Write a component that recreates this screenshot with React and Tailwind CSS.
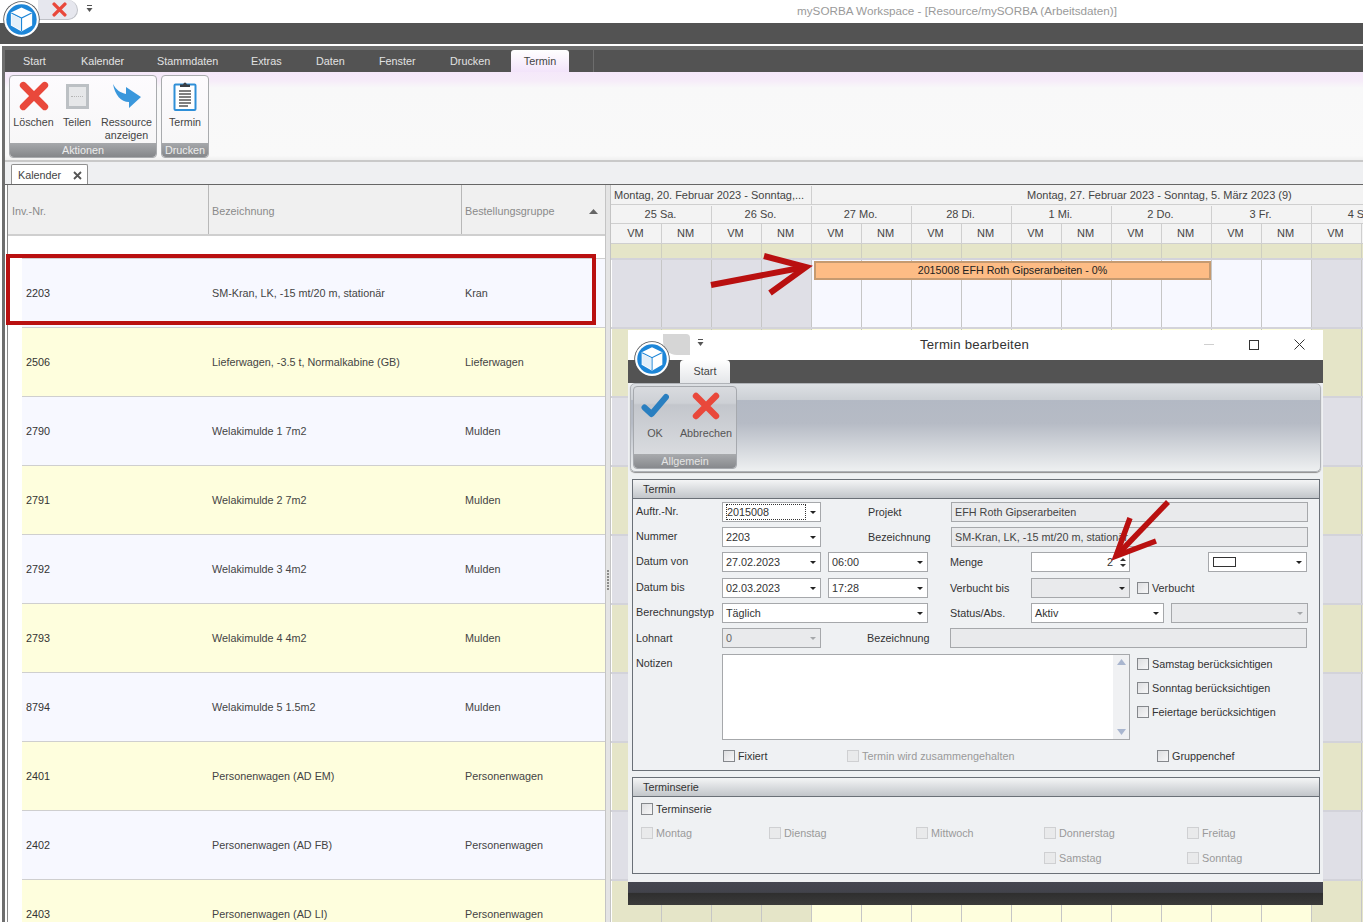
import React from "react";

const rows = [
  ["2203", "SM-Kran, LK, -15 mt/20 m, stationär", "Kran"],
  ["2506", "Lieferwagen, -3.5 t, Normalkabine (GB)", "Lieferwagen"],
  ["2790", "Welakimulde 1 7m2", "Mulden"],
  ["2791", "Welakimulde 2 7m2", "Mulden"],
  ["2792", "Welakimulde 3 4m2", "Mulden"],
  ["2793", "Welakimulde 4 4m2", "Mulden"],
  ["8794", "Welakimulde 5 1.5m2", "Mulden"],
  ["2401", "Personenwagen (AD EM)", "Personenwagen"],
  ["2402", "Personenwagen (AD FB)", "Personenwagen"],
  ["2403", "Personenwagen (AD LI)", "Personenwagen"],
];
const days = ["25 Sa.", "26 So.", "27 Mo.", "28 Di.", "1 Mi.", "2 Do.", "3 Fr.", "4 Sa."];
const halves = Array.from({ length: 16 }, (_, i) => i);
const isWeekend = (i) => i < 4 || i >= 14;

function Logo({ size }) {
  return (
    <svg width={size} height={size} viewBox="0 0 40 40">
      <circle cx="20" cy="20" r="19.7" fill="#4f5154" />
      <circle cx="20" cy="20" r="18.8" fill="#ffffff" />
      <circle cx="20" cy="20" r="16.4" fill="#1d86d8" />
      <path d="M20 7 L31.5 12.5 L31.5 26.5 L20 33 L8.5 26.5 L8.5 12.5 Z" fill="#ffffff" />
      <path d="M9 13 L20 18.5 L31 13 M20 18.5 V32.5" stroke="#1d86d8" strokeWidth="1.3" fill="none" />
      <path d="M9.2 14.2 L19.3 19.2 L19.3 31.6 L9.2 25.9 Z" fill="#e3eff9" />
    </svg>
  );
}

function QuickArrow({ color = "#555" }) {
  return (
    <svg width="7" height="8" viewBox="0 0 7 8">
      <rect x="1" y="0" width="5" height="1" fill={color} />
      <path d="M0.5 3 H6.5 L3.5 7 Z" fill={color} />
    </svg>
  );
}

function RedX({ w, h }) {
  return (
    <svg width={w} height={h} viewBox="0 0 28 28">
      <path d="M4 4 L24 24 M24 4 L4 24" stroke="#e9483b" strokeWidth="6.4" strokeLinecap="round" fill="none" />
    </svg>
  );
}

function RibbonButton({ w, icon, children }) {
  return (
    <div className={`${w} flex flex-col items-center pt-[3px] text-[10.7px] leading-[13px] text-[#444] text-center`}>
      <div className="h-[34px] flex items-center justify-center">{icon}</div>
      <div className="mt-[3px]">{children}</div>
    </div>
  );
}

function Tri({ light }) {
  return (
    <svg width="6" height="3" viewBox="0 0 6 3" className="shrink-0">
      <path d="M0 0 H6 L3 3 Z" fill={light ? "#a5a7aa" : "#222"} />
    </svg>
  );
}

function Combo({ w, value, disabled, focus, light }) {
  return (
    <div
      className={`${w} h-[20px] shrink-0 flex items-center justify-between pl-[3px] pr-[4px] border border-[#a6a8ab] text-[10.8px] ${
        disabled ? "bg-[#e9eaec] text-[#666]" : "bg-white text-[#333]"
      }`}
    >
      {focus ? <span className="border border-dotted border-[#333] w-[80px] h-[16px] leading-[14px]">{value}</span> : <span>{value}</span>}
      <Tri light={light} />
    </div>
  );
}

function Box({ w, value }) {
  return (
    <div className={`${w} h-[20px] shrink-0 flex items-center pl-[3px] border border-[#a6a8ab] bg-[#e9eaec] text-[10.8px] text-[#444] overflow-hidden whitespace-nowrap`}>
      {value}
    </div>
  );
}

function Label({ w, children, ml }) {
  return <div className={`${w} ${ml || ""} shrink-0 text-[10.8px] text-[#333] whitespace-nowrap`}>{children}</div>;
}

function Check({ label, disabled, className = "" }) {
  return (
    <div className={`flex items-center h-[16px] text-[10.8px] whitespace-nowrap ${disabled ? "text-[#9a9a9a]" : "text-[#333]"} ${className}`}>
      <span className={`w-[12px] h-[12px] shrink-0 border ${disabled ? "border-[#cfd0d2] bg-[#e9eaeb]" : "border-[#85888c] bg-gradient-to-br from-[#dedfe1] to-[#f7f7f8]"}`} />
      <span className="ml-[3px]">{label}</span>
    </div>
  );
}

function PanelHeader({ children }) {
  return (
    <div className="h-[19px] flex items-center pl-[10px] text-[10.8px] text-[#333] border-b border-[#6a7077] bg-gradient-to-b from-[#f4f5f6] to-[#c2c6ca]">
      {children}
    </div>
  );
}

function Dialog() {
  return (
    <div className="absolute left-[628px] top-[330px] w-[695px] h-[575px] flex flex-col bg-[#eff1f3]">
      <div className="h-[30px] shrink-0 bg-white flex items-center relative">
        <div className="absolute left-[35px] top-[4px] w-[27px] h-[21px] bg-[#d6d6d6] rounded-tr-[4px] rounded-bl-[14px]" />
        <div className="absolute left-[69px] top-[9px]"><QuickArrow /></div>
        <div className="flex-1 text-center text-[13.2px] text-[#333] tracking-[0.2px] pr-[2px]">Termin bearbeiten</div>
        <div className="absolute right-[109px] top-[14px] w-[10px] h-[1px] bg-[#cfcfcf]" />
        <div className="absolute right-[64px] top-[10px] w-[10px] h-[10px] border border-[#333]" />
        <svg className="absolute right-[18px] top-[9px]" width="11" height="11" viewBox="0 0 11 11">
          <path d="M0.5 0.5 L10.5 10.5 M10.5 0.5 L0.5 10.5" stroke="#333" strokeWidth="1" />
        </svg>
      </div>
      <div className="h-[23px] shrink-0 bg-[#535353] flex items-end pl-[52px]">
        <div className="w-[50px] h-[23px] rounded-t-[4px] bg-gradient-to-b from-[#ffffff] to-[#e4e6e9] text-[10.8px] text-[#444] flex items-center justify-center">Start</div>
      </div>
      <div className="h-[89px] shrink-0 mx-[2px] rounded-[5px] border border-[#b0b3b8] shadow-[0_1px_1px_#8d8d8d] bg-[linear-gradient(to_bottom,#dde0e4_0%,#ccd0d5_18%,#b3b9c4_19%,#b6bbc5_45%,#eef0f1_100%)] p-[2px] flex">
        <div className="w-[104px] h-[83px] rounded-[4px] border border-[#a6a9ae] bg-[linear-gradient(to_bottom,#d9dbdf_0%,#cdd0d5_20%,#c3c6cc_22%,#dfe1e4_100%)] flex flex-col">
          <div className="flex-1 flex">
            <div className="w-[42px] flex flex-col items-center pt-[6px] text-[10.8px] leading-[13px] text-[#555]">
              <svg width="28" height="25" viewBox="0 0 28 25">
                <path d="M3.5 14.5 L10.5 21 L25 4" stroke="#2a7fc0" strokeWidth="6" strokeLinecap="round" strokeLinejoin="round" fill="none" />
              </svg>
              <div className="mt-[9px]">OK</div>
            </div>
            <div className="w-[60px] flex flex-col items-center pt-[5px] text-[10.8px] leading-[13px] text-[#555]">
              <RedX w={30} h={28} />
              <div className="mt-[7px]">Abbrechen</div>
            </div>
          </div>
          <div className="h-[14px] rounded-b-[4px] bg-gradient-to-b from-[#a9abae] to-[#87898d] text-[10.8px] leading-[14px] text-center text-[#e4e4e4]">Allgemein</div>
        </div>
      </div>

      <div className="ml-[4px] mr-[3px] mt-[7px] h-[292px] shrink-0 border border-[#6a7077] flex flex-col">
        <PanelHeader>Termin</PanelHeader>
        <div className="pl-[3px] pt-[3px] flex flex-col gap-[5px]">
          <div className="flex items-center h-[20px]">
            <Label w="w-[86px]" ml="pb-[2px]">Auftr.-Nr.</Label>
            <Combo w="w-[99px]" value="2015008" focus />
            <Label w="w-[83px]" ml="ml-[47px]">Projekt</Label>
            <Box w="w-[357px]" value="EFH Roth Gipserarbeiten" />
          </div>
          <div className="flex items-center h-[20px]">
            <Label w="w-[86px]" ml="pb-[2px]">Nummer</Label>
            <Combo w="w-[99px]" value="2203" />
            <Label w="w-[83px]" ml="ml-[47px]">Bezeichnung</Label>
            <Box w="w-[357px]" value="SM-Kran, LK, -15 mt/20 m, stationär" />
          </div>
          <div className="flex items-center h-[20px]">
            <Label w="w-[86px]" ml="pb-[2px]">Datum von</Label>
            <Combo w="w-[99px]" value="27.02.2023" />
            <div className="ml-[7px]"><Combo w="w-[100px]" value="06:00" /></div>
            <Label w="w-[81px]" ml="ml-[22px]">Menge</Label>
            <div className="w-[99px] h-[20px] shrink-0 bg-white border border-[#a6a8ab] flex items-center justify-end pr-[3px] gap-[7px] text-[10.8px] text-[#333]">
              <span>2</span>
              <span className="flex flex-col gap-[3px]">
                <svg width="6" height="3" viewBox="0 0 6 3"><path d="M0 3 H6 L3 0 Z" fill="#333" /></svg>
                <svg width="6" height="3" viewBox="0 0 6 3"><path d="M0 0 H6 L3 3 Z" fill="#333" /></svg>
              </span>
            </div>
            <div className="ml-[78px] w-[99px] h-[20px] shrink-0 bg-white border border-[#a6a8ab] flex items-center justify-between pl-[4px] pr-[4px]">
              <span className="w-[23px] h-[10px] border border-[#333] bg-white" />
              <Tri />
            </div>
          </div>
          <div className="flex items-center h-[20px] mt-[1px]">
            <Label w="w-[86px]" ml="pb-[2px]">Datum bis</Label>
            <Combo w="w-[99px]" value="02.03.2023" />
            <div className="ml-[7px]"><Combo w="w-[100px]" value="17:28" /></div>
            <Label w="w-[81px]" ml="ml-[22px]">Verbucht bis</Label>
            <Combo w="w-[99px]" value="" disabled />
            <Check label="Verbucht" className="ml-[7px]" />
          </div>
          <div className="flex items-center h-[20px]">
            <Label w="w-[86px]" ml="pb-[2px]">Berechnungstyp</Label>
            <Combo w="w-[206px]" value="Täglich" />
            <Label w="w-[81px]" ml="ml-[22px]">Status/Abs.</Label>
            <Combo w="w-[133px]" value="Aktiv" />
            <div className="ml-[7px]"><Combo w="w-[137px]" value="" disabled light /></div>
          </div>
          <div className="flex items-center h-[20px]">
            <Label w="w-[86px]">Lohnart</Label>
            <Combo w="w-[99px]" value="0" disabled light />
            <Label w="w-[83px]" ml="ml-[46px]">Bezeichnung</Label>
            <Box w="w-[357px]" value="" />
          </div>
          <div className="flex items-start h-[86px] mt-[1px]">
            <div className="w-[86px] shrink-0 text-[10.8px] text-[#333] pt-[1px]">Notizen</div>
            <div className="w-[408px] h-[86px] shrink-0 border border-[#a6a8ab] bg-white flex justify-end">
              <div className="w-[16px] bg-[#f0f1f3] flex flex-col items-center justify-between py-[4px]">
                <svg width="9" height="6" viewBox="0 0 9 6"><path d="M0 6 H9 L4.5 0 Z" fill="#a9b6cf" /></svg>
                <svg width="9" height="6" viewBox="0 0 9 6"><path d="M0 0 H9 L4.5 6 Z" fill="#a9b6cf" /></svg>
              </div>
            </div>
            <div className="ml-[7px] pt-[2px] flex flex-col gap-[8px]">
              <Check label="Samstag berücksichtigen" />
              <Check label="Sonntag berücksichtigen" />
              <Check label="Feiertage berücksichtigen" />
            </div>
          </div>
          <div className="flex items-center h-[16px] mt-[3px] pl-[86px]">
            <Check label="Fixiert" className="ml-[1px] w-[124px]" />
            <Check label="Termin wird zusammengehalten" disabled className="w-[310px]" />
            <Check label="Gruppenchef" />
          </div>
        </div>
      </div>

      <div className="ml-[4px] mr-[3px] mt-[6px] h-[97px] shrink-0 border border-[#6a7077] flex flex-col">
        <PanelHeader>Terminserie</PanelHeader>
        <div className="pl-[8px] pt-[4px]">
          <Check label="Terminserie" />
          <div className="mt-[8px] grid grid-cols-[128px_147px_128px_143px_1fr] auto-rows-[16px] gap-y-[9px]">
            <Check label="Montag" disabled />
            <Check label="Dienstag" disabled />
            <Check label="Mittwoch" disabled />
            <Check label="Donnerstag" disabled />
            <Check label="Freitag" disabled />
            <div className="col-start-4"><Check label="Samstag" disabled /></div>
            <Check label="Sonntag" disabled />
          </div>
        </div>
      </div>

      <div className="mt-auto h-[23px] shrink-0 bg-[linear-gradient(to_bottom,#454650_0%,#42434b_45%,#2f2f2f_50%,#3a3a3a_100%)]" />
      <div className="absolute left-[6px] top-[11px]"><Logo size={36} /></div>
    </div>
  );
}

export default function App() {
  const tabs = [
    ["Start", "w-[58px]"],
    ["Kalender", "w-[76px]"],
    ["Stammdaten", "w-[94px]"],
    ["Extras", "w-[65px]"],
    ["Daten", "w-[63px]"],
    ["Fenster", "w-[71px]"],
    ["Drucken", "w-[61px]"],
  ];
  return (
    <div className="relative w-[1363px] h-[922px] overflow-hidden bg-white flex flex-col font-['Liberation_Sans',Arial,sans-serif] text-[10.8px]">
      <div className="h-[23px] shrink-0 bg-white relative text-center text-[11.7px] leading-[22px] text-[#9a9a9a] pl-[551px]">
        mySORBA Workspace - [Resource/mySORBA (Arbeitsdaten)]
      </div>
      <div className="h-[21px] shrink-0 bg-[#535353]" />
      <div className="h-[2px] shrink-0 bg-white" />

      <div className="flex-1 min-h-0 ml-[2px] border-l-[3px] border-t-[4px] border-[#6e6e6e] flex flex-col">
        {/* ribbon tabs */}
        <div className="h-[22px] shrink-0 bg-[#535353] flex items-end text-[10.8px] text-[#e2e2e2]">
          <div className="flex items-center h-[22px] pl-[18px]">
            {tabs.map(([t, w]) => (
              <div key={t} className={`${w} shrink-0`}>{t}</div>
            ))}
          </div>
          <div className="w-[58px] h-[22px] shrink-0 rounded-t-[3px] bg-gradient-to-b from-[#ffffff] to-[#f3e4fa] text-[#444] flex items-center justify-center">Termin</div>
          <div className="ml-[24px] w-px h-[22px] bg-[#6d6d6d]" />
        </div>
        {/* ribbon */}
        <div className="h-[88px] shrink-0 flex gap-[4px] pl-[4px] pt-[3px] bg-[linear-gradient(to_bottom,#f5e8fa_0%,#f6ecf9_10%,#f8f8f9_18%,#f9f9f9_95%,#f0f0f0_100%)]">
          <div className="w-[148px] h-[83px] rounded-[4px] border border-[#a9abae] flex flex-col bg-gradient-to-b from-[#fdfbfe] to-[#f6f6f6]">
            <div className="flex-1 flex">
              <RibbonButton w="w-[47px]" icon={<RedX w={30} h={30} />}>Löschen</RibbonButton>
              <RibbonButton w="w-[40px]" icon={<div className="w-[23px] h-[25px] border-[3px] border-[#bcc0c4] bg-[#e6e7e9] flex items-center justify-center"><div className="w-[12px] border-t border-dotted border-[#b5b5b5]" /></div>}>Teilen</RibbonButton>
              <RibbonButton w="w-[59px]" icon={
                <svg width="30" height="26" viewBox="0 0 30 26">
                  <path d="M1 1 C4 7 9 10 14 11 L14 4 L29 14 L17 25 L17 19 C9 19 3 12 1 1 Z" fill="#3a97dc" />
                </svg>
              }>Ressource<br />anzeigen</RibbonButton>
            </div>
            <div className="h-[14px] rounded-b-[4px] bg-gradient-to-b from-[#a6a8ab] to-[#85878a] text-center leading-[14px] text-[#ececec]">Aktionen</div>
          </div>
          <div className="w-[48px] h-[83px] rounded-[4px] border border-[#a9abae] flex flex-col bg-gradient-to-b from-[#fdfbfe] to-[#f6f6f6]">
            <div className="flex-1 flex">
              <RibbonButton w="w-full" icon={
                <svg width="24" height="30" viewBox="0 0 24 30">
                  <rect x="1.5" y="3.5" width="21" height="25.5" rx="1" fill="#fff" stroke="#2f8fd8" strokeWidth="2" />
                  <path d="M7 6 V3.5 H10 Q12 -0.5 14 3.5 H17 V6 Z" fill="#3a3f45" />
                  <path d="M6 10 H18 M6 13 H18 M6 16 H18 M6 19 H18 M6 22 H18 M6 25 H15" stroke="#555" strokeWidth="1.3" />
                </svg>
              }>Termin</RibbonButton>
            </div>
            <div className="h-[14px] rounded-b-[4px] bg-gradient-to-b from-[#a6a8ab] to-[#85878a] text-center leading-[14px] text-[#ececec]">Drucken</div>
          </div>
        </div>
        {/* doc tabs */}
        <div className="h-[25px] shrink-0 border-t-2 border-[#c9c9c9] border-b border-b-[#666] bg-[#eff0f2] flex items-end pl-[6px]">
          <div className="w-[77px] h-[20px] border border-b-0 border-[#8f8f8f] rounded-t-[2px] bg-white flex items-center justify-between pl-[6px] pr-[5px] pt-[2px] text-[#444]">
            <span>Kalender</span>
            <svg width="9" height="9" viewBox="0 0 9 9"><path d="M1 1 L8 8 M8 1 L1 8" stroke="#555" strokeWidth="1.8" /></svg>
          </div>
        </div>
        {/* body */}
        <div className="flex-1 min-h-0 flex pl-[2px]">
          <div className="w-[1px] shrink-0 bg-[#8a8a8a]" />
          {/* table */}
          <div className="w-[597px] shrink-0 flex flex-col">
            <div className="h-[51px] shrink-0 flex bg-[#f0f0f0] border-b-2 border-[#cfcfcf] text-[#8a8a8a]">
              <div className="w-[201px] pl-[4px] pt-[3px] flex items-center border-r border-[#b8b8b8]">Inv.-Nr.</div>
              <div className="w-[253px] pl-[3px] pt-[3px] flex items-center border-r border-[#b8b8b8]">Bezeichnung</div>
              <div className="flex-1 pl-[3px] pr-[7px] pt-[3px] flex items-center justify-between">
                <span>Bestellungsgruppe</span>
                <svg width="9" height="5" viewBox="0 0 9 5"><path d="M0 5 H9 L4.5 0 Z" fill="#666" /></svg>
              </div>
            </div>
            <div className="h-[22px] shrink-0 bg-white" />
            <div className="pl-[14px]">
              {rows.map((r, i) => (
                <div key={r[0]} className={`h-[69px] flex items-center border-t border-[#cfcfcf] text-[#444] ${i % 2 ? "bg-[#fefedd]" : "bg-[#f7f8ff]"}`}>
                  <div className="w-[186px] pl-[4px] text-[#333]">{r[0]}</div>
                  <div className="w-[254px] pl-[4px]">{r[1]}</div>
                  <div className="pl-[3px]">{r[2]}</div>
                </div>
              ))}
            </div>
          </div>
          {/* splitter */}
          <div className="w-[6px] shrink-0 bg-[#e4e4e4] border-x border-[#c4c4c4] flex flex-col items-center justify-center">
            <div className="mt-[52px] flex flex-col gap-[1px]">
              {[0, 1, 2, 3, 4, 5, 6].map((d) => <div key={d} className="w-[2px] h-[2px] bg-[#8d8d8d]" />)}
            </div>
          </div>
          {/* timeline */}
          <div className="flex-1 min-w-0 relative overflow-hidden flex flex-col text-[11px]">
            <div className="h-[20px] shrink-0 flex bg-[#f3f3f3] border-b border-[#cfcfcf] text-[#444] whitespace-nowrap pt-[1px]">
              <div className="w-[201px] shrink-0 pl-[3px] flex items-center border-r border-[#cfcfcf]">Montag, 20. Februar 2023 - Sonntag,...</div>
              <div className="w-[400px] shrink-0 pl-[215px] flex items-center">Montag, 27. Februar 2023 - Sonntag, 5. März 2023 (9)</div>
            </div>
            <div className="h-[19px] shrink-0 flex bg-[#f3f3f3] border-b border-[#cfcfcf] text-[#444] whitespace-nowrap pl-[1px] pt-[1px]">
              {days.map((d) => (
                <div key={d} className="w-[100px] shrink-0 flex items-center justify-center pr-[2px] border-r border-[#cfcfcf]">{d}</div>
              ))}
            </div>
            <div className="h-[20px] shrink-0 flex bg-[#f3f3f3] border-b border-[#cfcfcf] text-[#444] pl-[1px]">
              {halves.map((h) => (
                <div key={h} className="w-[50px] shrink-0 flex items-center justify-center pr-[2px] border-r border-[#cfcfcf]">{h % 2 ? "NM" : "VM"}</div>
              ))}
            </div>
            <div className="h-[14px] shrink-0 flex bg-[#e5e5c8] pl-[1px]">
              {halves.map((h) => <div key={h} className="w-[50px] shrink-0 border-r border-[#cfcfc0]" />)}
            </div>
            {rows.map((r, i) => (
              <div key={r[0]} className="h-[69px] shrink-0 flex border-t-2 border-[#d3d3da] pl-[1px]">
                {halves.map((h) => (
                  <div
                    key={h}
                    className={`w-[50px] shrink-0 border-r border-[#c6c6c6] ${
                      i % 2
                        ? isWeekend(h) ? "bg-[#e5e5c8]" : "bg-[#fefedd]"
                        : isWeekend(h) ? "bg-[#dfdfe6]" : "bg-[#f7f8ff]"
                    }`}
                  />
                ))}
              </div>
            ))}
            <div className="absolute left-[203px] top-[76px] w-[397px] h-[19px] bg-[#fdbc85] border-2 border-[#c59a70] flex items-center justify-center text-[10.7px] text-[#222] whitespace-nowrap">
              2015008 EFH Roth Gipserarbeiten - 0%
            </div>
          </div>
        </div>
      </div>

      {/* window logo and quick access */}
      <div className="absolute left-[38px] top-0 w-[40px] h-[20px] rounded-r-[10px] bg-[#e6e7ee] border-b border-r border-[#bfc1c7] flex items-center justify-center pl-[3px]">
        <RedX w={17} h={15} />
      </div>
      <div className="absolute left-[86px] top-[5px]"><QuickArrow /></div>
      <div className="absolute left-[3px] top-[1px]"><Logo size={37} /></div>

      <Dialog />

      {/* annotations */}
      <div className="absolute left-[6px] top-[254px] w-[590px] h-[71px] border-[4px] border-[#b91010]" />
      <svg className="absolute left-[705px] top-[250px]" width="110" height="50" viewBox="705 250 110 50">
        <path d="M711 285 L800 268" stroke="#b91010" strokeWidth="6" fill="none" />
        <path d="M764 256 L806 267 L770 293" stroke="#b91010" strokeWidth="6" fill="none" />
      </svg>
      <svg className="absolute left-[1105px] top-[495px]" width="70" height="70" viewBox="1105 495 70 70">
        <path d="M1168 502 L1120 552" stroke="#b91010" strokeWidth="5.5" fill="none" />
        <path d="M1130 518 L1116 556 L1156 541" stroke="#b91010" strokeWidth="5.5" fill="none" />
      </svg>
    </div>
  );
}
